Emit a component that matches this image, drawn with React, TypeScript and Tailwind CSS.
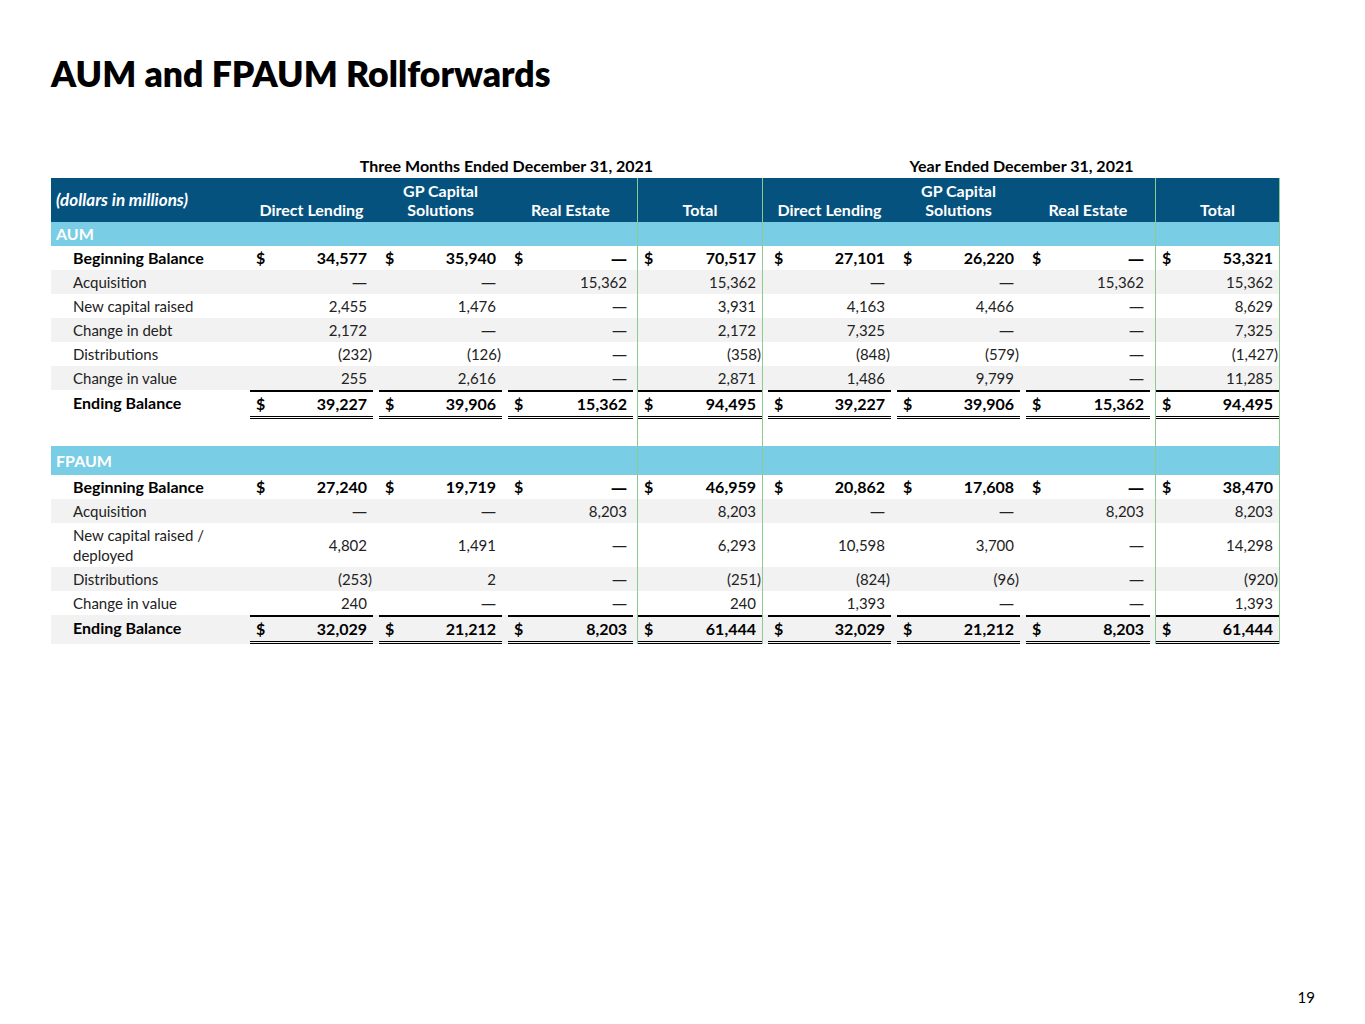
import React from "react";

type Row = {
  label: string;
  vals: string[];
  bold?: boolean;
  dollar?: boolean;
  gray?: boolean;
  ending?: boolean;
  tall?: boolean;
};

const GREEN = "border-[#8ccb8f]";
const GRID = "grid grid-cols-[199px_129px_129px_129px_126px_128px_129px_135px_125px]";

// wrapper classes per data column (pads + green box around totals)
const cellWrap = [
  "pr-[6px]",
  "pr-[6px]",
  "pr-[4px]",
  "border-x " + GREEN,
  "pl-[5px]",
  "pl-[6px]",
  "pl-[6px] pr-[5px]",
  "border-x " + GREEN,
];

const aum: Row[] = [
  { label: "Beginning Balance", bold: true, dollar: true, vals: ["34,577", "35,940", "—", "70,517", "27,101", "26,220", "—", "53,321"] },
  { label: "Acquisition", gray: true, vals: ["—", "—", "15,362", "15,362", "—", "—", "15,362", "15,362"] },
  { label: "New capital raised", vals: ["2,455", "1,476", "—", "3,931", "4,163", "4,466", "—", "8,629"] },
  { label: "Change in debt", gray: true, vals: ["2,172", "—", "—", "2,172", "7,325", "—", "—", "7,325"] },
  { label: "Distributions", vals: ["(232)", "(126)", "—", "(358)", "(848)", "(579)", "—", "(1,427)"] },
  { label: "Change in value", gray: true, vals: ["255", "2,616", "—", "2,871", "1,486", "9,799", "—", "11,285"] },
  { label: "Ending Balance", bold: true, dollar: true, ending: true, vals: ["39,227", "39,906", "15,362", "94,495", "39,227", "39,906", "15,362", "94,495"] },
];

const fpaum: Row[] = [
  { label: "Beginning Balance", bold: true, dollar: true, vals: ["27,240", "19,719", "—", "46,959", "20,862", "17,608", "—", "38,470"] },
  { label: "Acquisition", gray: true, vals: ["—", "—", "8,203", "8,203", "—", "—", "8,203", "8,203"] },
  { label: "New capital raised / deployed", tall: true, vals: ["4,802", "1,491", "—", "6,293", "10,598", "3,700", "—", "14,298"] },
  { label: "Distributions", gray: true, vals: ["(253)", "2", "—", "(251)", "(824)", "(96)", "—", "(920)"] },
  { label: "Change in value", vals: ["240", "—", "—", "240", "1,393", "—", "—", "1,393"] },
  { label: "Ending Balance", bold: true, dollar: true, ending: true, gray: true, vals: ["32,029", "21,212", "8,203", "61,444", "32,029", "21,212", "8,203", "61,444"] },
];

function Value({ v }: { v: string }) {
  if (v === "—") {
    return <span className="font-['Noto_Sans']">—</span>;
  }
  if (v.startsWith("(")) {
    return (
      <span>
        {v.slice(0, -1)}
        <span className="-mr-[5px]">)</span>
      </span>
    );
  }
  return <span>{v}</span>;
}

function DataRow({ row }: { row: Row }) {
  const h = row.tall ? "h-[44px]" : row.ending ? "h-[29px]" : "h-[24px]";
  return (
    <div
      className={`${GRID} ${h} ${row.gray ? "bg-[#f2f2f2]" : "bg-white"} ${
        row.bold ? "text-[16px] font-bold text-black" : "text-[#222]"
      }`}
    >
      <div className={`flex items-center pl-[22px] ${row.tall ? "leading-[20px] pr-[40px]" : ""} ${row.ending ? "pb-[3px]" : ""}`}>
        {row.label}
      </div>
      {row.vals.map((v, i) => (
        <div key={i} className={cellWrap[i]}>
          <div
            className={`flex h-full items-center justify-between pl-[6px] pr-[6px] ${
              row.ending ? "border-t-2 border-b-[3px] border-double border-t-black border-b-black" : ""
            }`}
            style={row.ending ? { borderTopStyle: "solid" } : undefined}
          >
            <span>{row.dollar ? "$" : ""}</span>
            <Value v={v} />
          </div>
        </div>
      ))}
    </div>
  );
}

function Band({ label, h }: { label: string; h: string }) {
  return (
    <div className={`${GRID} ${h} bg-[#79cde4] text-[16px] font-bold text-white`}>
      <div className="flex items-center pl-[5px]">{label}</div>
      {cellWrap.map((c, i) => (
        <div key={i} className={c}></div>
      ))}
    </div>
  );
}

function Spacer() {
  return (
    <div className={`${GRID} h-[27px] bg-white`}>
      <div></div>
      {cellWrap.map((c, i) => (
        <div key={i} className={c}></div>
      ))}
    </div>
  );
}

const heads = ["Direct Lending", "GP Capital\nSolutions", "Real Estate", "Total", "Direct Lending", "GP Capital\nSolutions", "Real Estate", "Total"];

export default function App() {
  return (
    <div
      className="flex h-[1024px] w-[1365px] flex-col bg-white text-[15px] text-black"
      style={{ fontFamily: "Lato, 'Noto Sans', sans-serif" }}
    >
      <h1 className="ml-[51px] mt-[50px] text-[35.5px] font-extrabold leading-[48px]">AUM and FPAUM Rollforwards</h1>

      <div className="ml-[51px] mt-[56px] w-[1229px]">
        {/* period headings */}
        <div className={`${GRID} h-[24px] text-[16px] font-bold`}>
          <div></div>
          <div className="col-span-4 flex items-center justify-center">Three Months Ended December 31, 2021</div>
          <div className="col-span-4 flex items-center justify-center">Year Ended December 31, 2021</div>
        </div>

        {/* column header */}
        <div className={`${GRID} h-[44px] bg-[#05527f] text-[16px] font-bold text-white`}>
          <div className="flex items-center pl-[5px] text-[17px] italic">(dollars in millions)</div>
          {heads.map((hd, i) => (
            <div key={i} className={cellWrap[i]}>
              <div className="flex h-full items-end justify-center whitespace-pre-line pb-[3px] text-center leading-[19px]">{hd}</div>
            </div>
          ))}
        </div>

        <Band label="AUM" h="h-[24px]" />
        {aum.map((r) => (
          <DataRow key={r.label} row={r} />
        ))}
        <Spacer />
        <Band label="FPAUM" h="h-[29px]" />
        {fpaum.map((r) => (
          <DataRow key={r.label} row={r} />
        ))}
      </div>

      <div className="mt-auto flex justify-end pb-[17px] pr-[50px] text-[15px] leading-[20px]">19</div>
    </div>
  );
}
